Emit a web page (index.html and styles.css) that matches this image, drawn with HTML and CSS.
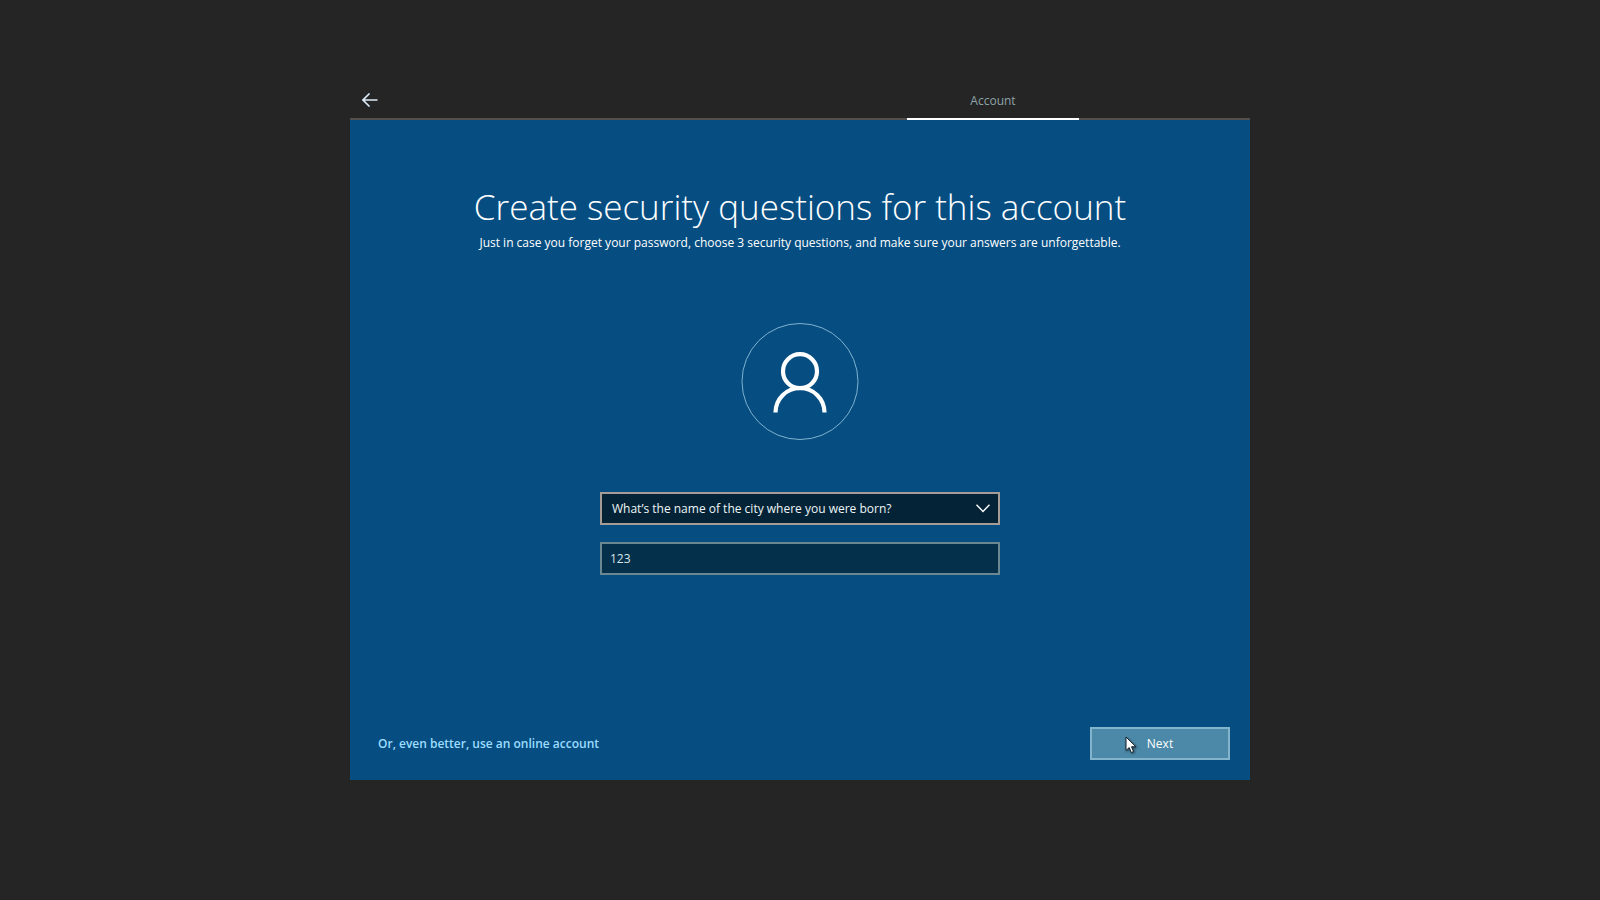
FILE: index.html
```html
<!DOCTYPE html>
<html lang="en">
<head>
    <meta charset="UTF-8">
    <meta name="viewport" content="width=device-width, initial-scale=1.0">
    <title>Create security questions</title>
    <link rel="stylesheet" href="styles.css">
</head>
<body>
    <div class="setup">
        <header class="topbar">
            <button type="button" class="back" aria-label="Back">
                <svg width="16" height="14" viewBox="0 0 16 14" fill="none" stroke="currentColor" stroke-width="1.6">
                    <path d="M15.5 7H1M7.5 0.5L1 7l6.5 6.5"/>
                </svg>
            </button>
            <span class="tab">Account</span>
        </header>

        <form class="panel">
            <h1>Create security questions for this account</h1>
            <p class="intro">Just in case you forget your password, choose 3 security questions, and make sure your answers are unforgettable.</p>

            <div class="avatar">
                <svg width="118" height="118" viewBox="0 0 118 118" fill="none" stroke="#fff" stroke-width="4.2">
                    <circle cx="59" cy="58.5" r="58" stroke="#7fb2cf" stroke-width="1"/>
                    <circle cx="59" cy="48.2" r="17"/>
                    <path d="M34.5 89.5a24.5 24.5 0 0 1 49 0"/>
                </svg>
            </div>

            <div class="fields">
                <div class="dropdown">
                    <select aria-label="Security question">
                        <option>What’s the name of the city where you were born?</option>
                    </select>
                    <svg class="chevron" width="14" height="9" viewBox="0 0 14 9" fill="none" stroke="currentColor" stroke-width="1.4">
                        <path d="M0.5 0.7L7 7.4l6.5-6.7"/>
                    </svg>
                </div>
                <input type="text" value="123" aria-label="Your answer">
            </div>

            <footer class="actions">
                <a href="#">Or, even better, use an online account</a>
                <button type="button" class="next">
                    Next
                    <svg class="cursor" width="12" height="18" viewBox="0 0 12 18">
                        <path d="M1 1v13.5l3.2-2.9 2.1 4.9 2.3-1-2.1-4.7H11z" fill="#fff" stroke="#10202b" stroke-width="1"/>
                    </svg>
                </button>
            </footer>
        </form>
    </div>
</body>
</html>
```

FILE: styles.css
```css
* {
    box-sizing: border-box;
}
body {
    display: flex;
    justify-content: center;
    min-height: 100vh;
    margin: 0;
    padding: 80px 20px 120px;
    background: #252525;
    color: #fff;
    font-family: "Open Sans", "Noto Sans", sans-serif;
    font-size: 12px;
}
button, select, input {
    font: inherit;
    color: inherit;
}
.setup {
    display: flex;
    flex-direction: column;
    width: 100%;
    max-width: 900px;
}

/* Top bar */
.topbar {
    display: flex;
    justify-content: space-between;
    height: 40px;
    padding-right: 19%;
    border-bottom: 2px solid #55504e;
}
.back {
    width: 40px;
    padding: 2px 0 0;
    border: none;
    background: none;
    color: #dbeaf5;
}
.back svg {
    display: block;
    margin: auto;
}
.tab {
    width: 172px;
    height: 40px;
    border-bottom: 2px solid #fff;
    color: #8fa3a8;
    line-height: 42px;
    text-align: center;
}

/* Blue panel */
.panel {
    display: flex;
    flex: 1;
    flex-direction: column;
    align-items: center;
    padding: 60px 20px 20px;
    background: #064e82;
}
h1 {
    margin: 0;
    font-size: 35px;
    font-weight: 300;
    line-height: 54px;
    text-align: center;
}
.intro {
    margin: 0;
    line-height: 18px;
    text-align: center;
}
.avatar {
    margin: 71px 0 51px;
}
.avatar svg {
    display: block;
}
.fields {
    display: flex;
    flex-direction: column;
    gap: 17px;
    width: 100%;
    max-width: 400px;
}
.dropdown {
    position: relative;
}
select, input {
    display: block;
    width: 100%;
    height: 33px;
    margin: 0;
    padding: 0 8px;
    border: 2px solid #6b8792;
    border-radius: 0;
    outline: none;
    background: #05304c;
    color: #d5e6ea;
}
select {
    appearance: none;
    padding: 0 10px;
    border-color: #a69c95;
    background: #042336;
    color: #eef6f8;
}
.chevron {
    position: absolute;
    top: 12px;
    right: 10px;
    pointer-events: none;
}

/* Bottom row */
.actions {
    display: flex;
    align-items: center;
    justify-content: space-between;
    width: 100%;
    margin-top: auto;
    padding-left: 8px;
}
.actions a {
    color: #9bdcff;
    font-weight: 600;
    text-decoration: none;
}
.next {
    position: relative;
    width: 140px;
    height: 33px;
    border: 2px solid #82b4cb;
    background: #4c88a8;
}
.cursor {
    position: absolute;
    top: 7px;
    left: 33px;
    filter: drop-shadow(1px 1px 1px rgba(0, 0, 0, 0.5));
}
```
